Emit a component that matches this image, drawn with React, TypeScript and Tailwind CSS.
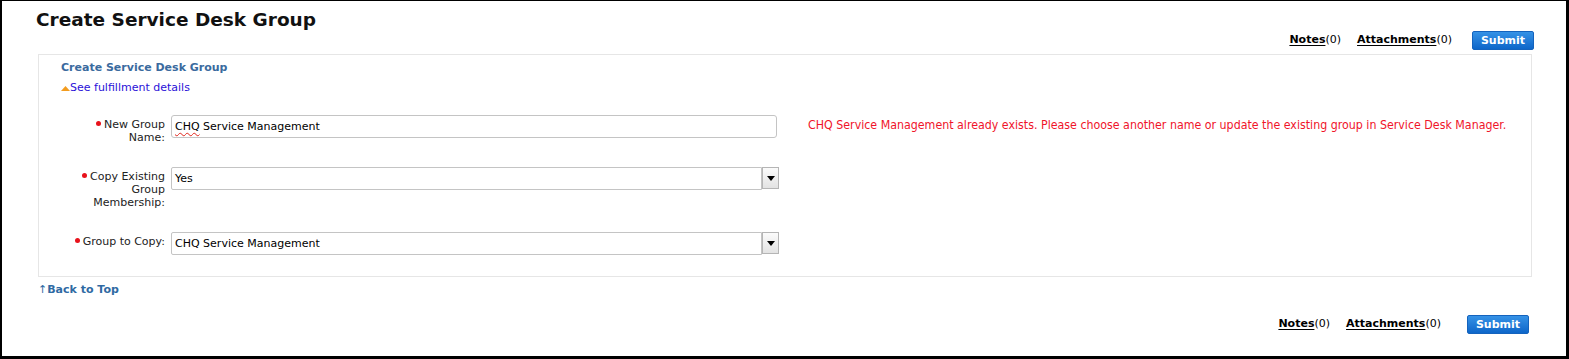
import React from 'react';

const Bullet = () => (
    <span className="inline-block w-[5px] h-[5px] rounded-full bg-[#e8121b] mr-[3px] align-[2px]"></span>
);

const Actions = ({ lastGap }: { lastGap: string }) => (
    <div className="flex items-center text-[11px] text-black">
        <span>
            <span className="font-bold underline underline-offset-2">Notes</span>(0)
        </span>
        <span className="ml-[16px]">
            <span className="font-bold underline underline-offset-2">Attachments</span>(0)
        </span>
        <button className={`${lastGap} h-[19px] w-[62px] rounded-[2px] border border-[#1463bd] bg-gradient-to-b from-[#3592e6] to-[#0d66c9] text-[11px] font-bold text-white leading-none`}>
            Submit
        </button>
    </div>
);

const SelectBox = ({ value }: { value: string }) => (
    <div className="flex items-start">
        <div className="h-[23px] w-[591px] border border-[#c4c4c4] rounded-l-[2px] bg-white pl-[3px] flex items-center text-[11px] text-black">
            {value}
        </div>
        <div className="h-[22px] w-[17px] border border-[#b5b5b5] bg-gradient-to-b from-[#fbfbfb] to-[#e3e3e3] flex items-center justify-center">
            <svg width="8" height="5" viewBox="0 0 8 5">
                <path d="M0 0 L8 0 L4 5 Z" fill="#000" />
            </svg>
        </div>
    </div>
);

const App = () => {
    return (
        <div className="w-full h-[359px] bg-white border-t border-l-2 border-r-[3px] border-b-[3px] border-black font-['DejaVu_Sans',Verdana,sans-serif] overflow-hidden">

            {/* page title */}
            <h1 className="pl-[34px] pt-[7px] text-[18.5px] leading-[24px] font-bold text-[#111]">Create Service Desk Group</h1>

            {/* top actions */}
            <div className="flex justify-end pr-[32px] -mt-[1px]">
                <Actions lastGap="ml-[20px]" />
            </div>

            {/* panel */}
            <div className="ml-[36px] mr-[34px] mt-[4px] h-[223px] border border-[#e6e6e6] pl-[22px] pt-[6px]">
                <div className="text-[11px] font-bold text-[#3a6a9e] leading-[14px]">Create Service Desk Group</div>
                <div className="mt-[6px] flex items-center text-[11px] leading-[14px] text-[#2a10d8]">
                    <svg width="9" height="5" viewBox="0 0 9 5">
                        <path d="M0 5 L4.5 0 L9 5 Z" fill="#f39c1f" />
                    </svg>
                    <span>See fulfillment details</span>
                </div>

                {/* form */}
                <div className="mt-[20px] -ml-[22px] flex flex-col gap-[23px] text-[11px] leading-[13px] text-[#222]">
                    <div className="flex items-start">
                        <div className="w-[126px] text-right pt-[3px]">
                            <Bullet />New Group<br />Name:
                        </div>
                        <div className="ml-[6px] h-[23px] w-[606px] border border-[#c4c4c4] rounded-[3px] pl-[3px] flex items-center text-black">
                            <span className="underline decoration-wavy decoration-[#e0261c] decoration-1 underline-offset-2">CHQ</span>&nbsp;Service Management
                        </div>
                        <div className="ml-[31px] pt-[4px] font-['DejaVu_Sans_Condensed','DejaVu_Sans',sans-serif] text-[12.3px] text-[#f0142a]">
                            CHQ Service Management already exists. Please choose another name or update the existing group in Service Desk Manager.
                        </div>
                    </div>
                    <div className="flex items-start">
                        <div className="w-[126px] text-right pt-[3px]">
                            <Bullet />Copy Existing<br />Group<br />Membership:
                        </div>
                        <div className="ml-[6px]">
                            <SelectBox value="Yes" />
                        </div>
                    </div>
                    <div className="flex items-start">
                        <div className="w-[126px] text-right pt-[3px]">
                            <Bullet />Group to Copy:
                        </div>
                        <div className="ml-[6px]">
                            <SelectBox value="CHQ Service Management" />
                        </div>
                    </div>
                </div>
            </div>

            {/* back to top */}
            <div className="ml-[36px] mt-[6px] text-[11px] leading-[14px] font-bold text-[#2f6aa3]">
                <span className="font-normal">↑</span>Back to Top
            </div>

            {/* bottom actions */}
            <div className="flex justify-end pr-[37px] mt-[18px]">
                <Actions lastGap="ml-[26px]" />
            </div>
        </div>
    );
};

export default App;
